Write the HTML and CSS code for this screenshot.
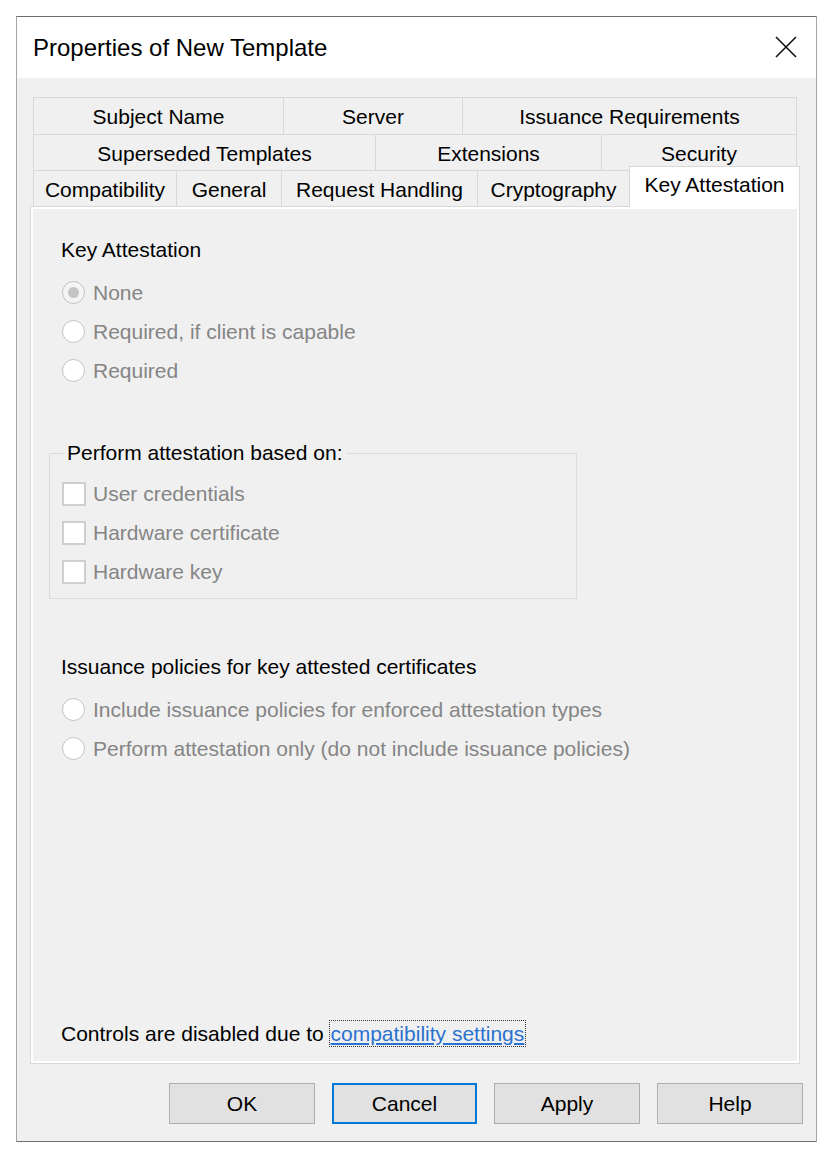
FILE: index.html
```html
<!DOCTYPE html>
<html>
<head>
<meta charset="utf-8">
<title>Properties of New Template</title>
<link rel="stylesheet" href="styles.css">
</head>
<body>
<div class="window">
  <div class="titlebar">
    <span class="title">Properties of New Template</span>
    <span class="close">
      <svg width="22" height="22" viewBox="0 0 22 22"><path d="M1 1 L21 21 M21 1 L1 21" stroke="#111" stroke-width="1.6" fill="none"/></svg>
    </span>
  </div>
  <div class="client">
    <div class="tabctl">
      <div class="tabrows">
        <div class="tabrow r1">
          <div class="tab w-subject">Subject Name</div>
          <div class="tab w-server">Server</div>
          <div class="tab w-issuance last">Issuance Requirements</div>
        </div>
        <div class="tabrow r2">
          <div class="tab w-superseded">Superseded Templates</div>
          <div class="tab w-extensions">Extensions</div>
          <div class="tab w-security last">Security</div>
        </div>
        <div class="tabrow r3">
          <div class="tab w-compat">Compatibility</div>
          <div class="tab w-general">General</div>
          <div class="tab w-request">Request Handling</div>
          <div class="tab w-crypto">Cryptography</div>
          <div class="tab w-keyatt selected">Key Attestation</div>
        </div>
      </div>
      <div class="panel">
        <div class="page">
          <div class="heading indent">Key Attestation</div>
          <div class="options indent">
            <div class="opt"><span class="radio checked"></span><span class="label">None</span></div>
            <div class="opt"><span class="radio"></span><span class="label">Required, if client is capable</span></div>
            <div class="opt"><span class="radio"></span><span class="label">Required</span></div>
          </div>
          <fieldset class="group">
            <legend>Perform attestation based on:</legend>
            <div class="opt"><span class="check"></span><span class="label">User credentials</span></div>
            <div class="opt"><span class="check"></span><span class="label">Hardware certificate</span></div>
            <div class="opt"><span class="check"></span><span class="label">Hardware key</span></div>
          </fieldset>
          <div class="heading heading2 indent">Issuance policies for key attested certificates</div>
          <div class="options indent">
            <div class="opt"><span class="radio"></span><span class="label">Include issuance policies for enforced attestation types</span></div>
            <div class="opt"><span class="radio"></span><span class="label">Perform attestation only (do not include issuance policies)</span></div>
          </div>
          <div class="footer indent">Controls are disabled due to <a class="link" href="#">compatibility settings</a></div>
        </div>
      </div>
    </div>
    <div class="buttons">
      <div class="btn">OK</div>
      <div class="btn default">Cancel</div>
      <div class="btn">Apply</div>
      <div class="btn">Help</div>
    </div>
  </div>
</div>
</body>
</html>
```

FILE: styles.css
```css
* { box-sizing: border-box; }
html, body { margin: 0; padding: 0; background: #ffffff; }
body {
  font-family: "Liberation Sans", Arial, sans-serif;
  font-size: 21px;
  color: #000;
}
.window {
  margin: 16px 0 0 16px;
  width: 801px;
  border: 1px solid #a6a6a6;
  border-top-color: #6e6e6e;
  border-bottom-color: #6e6e6e;
  background: #f0f0f0;
}
.titlebar {
  height: 61px;
  background: #ffffff;
  display: flex;
  align-items: center;
  justify-content: space-between;
  padding: 0 19px 0 16px;
}
.title {
  font-size: 24px;
  line-height: 28px;
  color: #000;
}
.close { display: flex; width: 22px; height: 22px; margin-top: -2px; }
.client {
  background: #f0f0f0;
  padding: 19px 15px 17px 13px;
}
.tabctl { width: 770px; }
.tabrows { margin-left: 3px; width: 764px; }
.tabrow { display: flex; }
.r1 { height: 37px; }
.r2 { height: 36px; }
.r3 { height: 36px; align-items: flex-start; }
.tab {
  flex: none;
  height: 100%;
  border-top: 1px solid #d9d9d9;
  border-left: 1px solid #d9d9d9;
  display: flex;
  align-items: center;
  justify-content: center;
  padding-top: 2px;
  line-height: 24px;
  white-space: nowrap;
  background: #f0f0f0;
}
.tab.last { border-right: 1px solid #d9d9d9; }
.w-subject { width: 250px; }
.w-server { width: 179px; }
.w-issuance { width: 335px; }
.w-superseded { width: 342px; }
.w-extensions { width: 226px; }
.w-security { width: 196px; }
.w-compat { width: 143px; }
.w-general { width: 105px; }
.w-request { width: 196px; }
.w-crypto { width: 152px; }
.w-keyatt { width: 171px; }
.tab.selected {
  position: relative;
  z-index: 1;
  margin-top: -4px;
  height: 41px;
  margin-right: -3px;
  background: #ffffff;
  border: 1px solid #d9d9d9;
  border-bottom: none;
  align-items: flex-start;
  padding-top: 6px;
}
.panel {
  border: 1px solid #d9d9d9;
  background: #ffffff;
  padding: 2px;
}
.page {
  background: #f0f0f0;
  height: 852px;
  padding: 29px 0 15px 16px;
  display: flex;
  flex-direction: column;
}
.indent { padding-left: 12px; }
.heading { line-height: 24px; height: 24px; color: #000; }
.options { margin-top: 11px; }
.options .opt { padding-left: 1px; }
.opt {
  height: 39px;
  display: flex;
  align-items: center;
}
.label { color: #858585; line-height: 24px; white-space: nowrap; }
.radio {
  flex: none;
  width: 23px;
  height: 23px;
  border: 1.5px solid #c2c2c2;
  border-radius: 50%;
  background: #ffffff;
  margin-right: 8px;
  display: flex;
  align-items: center;
  justify-content: center;
}
.radio.checked { background: #f4f4f4; }
.radio.checked::after {
  content: "";
  width: 11px;
  height: 11px;
  border-radius: 50%;
  background: #c4c4c4;
}
.group {
  margin: 51px 0 0 0;
  width: 528px;
  min-width: 0;
  border: 1px solid #dcdcdc;
  padding: 9px 12px 7px 12px;
}
.group legend {
  margin-left: 2px;
  padding: 0 3px;
  line-height: 24px;
  color: #000;
}
.check {
  flex: none;
  width: 24px;
  height: 24px;
  border: 2px solid #cfcfcf;
  background: #ffffff;
  margin-right: 7px;
}
.heading2 { margin-top: 56px; }
.footer {
  margin-top: auto;
  line-height: 24px;
  height: 24px;
  white-space: nowrap;
}
.link {
  color: #2a72d0;
  text-decoration: underline;
  outline: 1px dotted #333;
  outline-offset: 1px;
  margin-left: 1px;
}
.buttons {
  margin-top: 19px;
  margin-right: -2px;
  display: flex;
  justify-content: flex-end;
  gap: 17px;
}
.btn {
  width: 146px;
  height: 41px;
  background: #e1e1e1;
  border: 1px solid #adadad;
  display: flex;
  align-items: center;
  justify-content: center;
  line-height: 24px;
  color: #000;
}
.btn.default { border: 2px solid #0078d7; width: 145px; }
```
